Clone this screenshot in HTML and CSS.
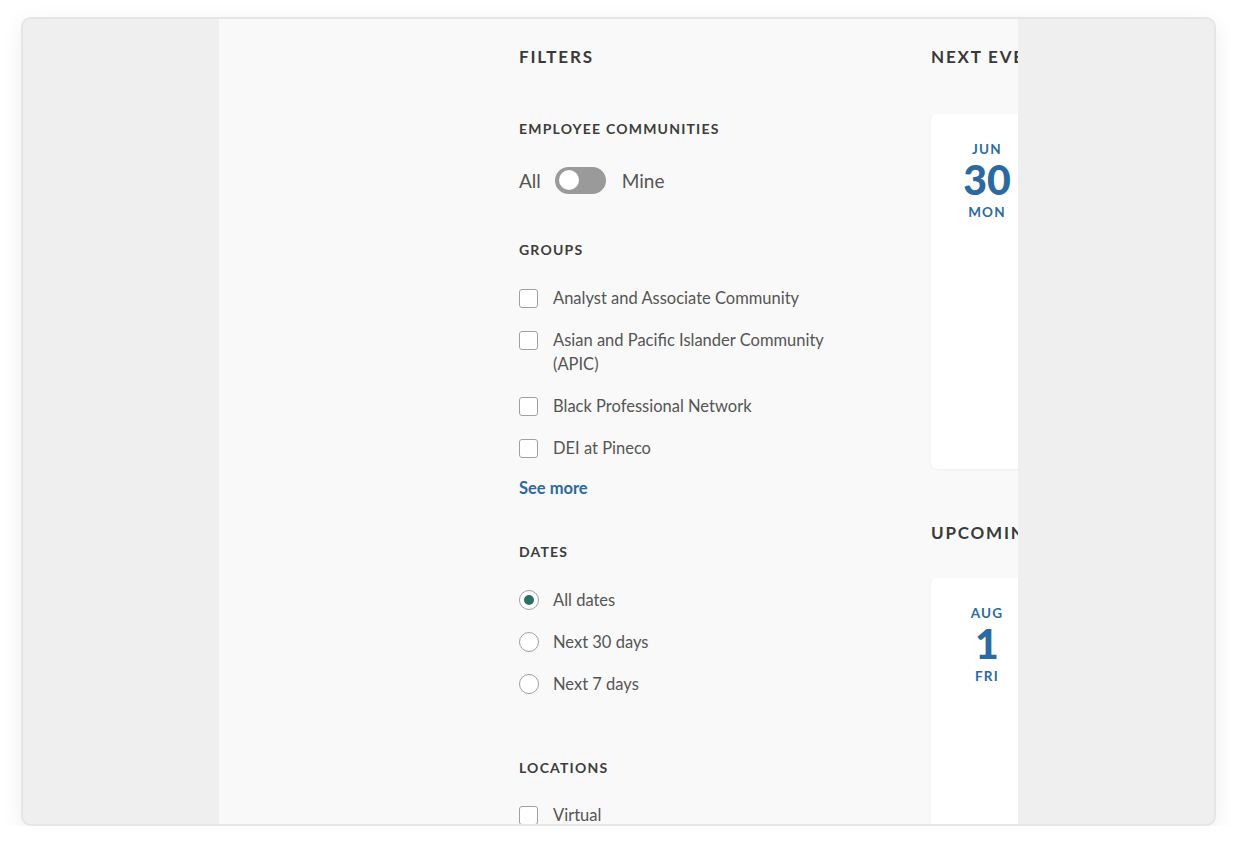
FILE: index.html
```html
<!DOCTYPE html>
<html lang="en">
<head>
<meta charset="utf-8">
<title>Events</title>
<link rel="stylesheet" href="styles.css">
</head>
<body>
<div class="frame">
  <div class="side"></div>
  <main class="center">
    <section class="filters">
      <h2 class="title">FILTERS</h2>

      <h3 class="label label-ec">EMPLOYEE COMMUNITIES</h3>
      <div class="toggle-row">
        <span>All</span>
        <span class="toggle"><span class="knob"></span></span>
        <span>Mine</span>
      </div>

      <h3 class="label label-groups">GROUPS</h3>
      <ul class="opts">
        <li class="opt"><span class="box"></span><span class="txt">Analyst and Associate Community</span></li>
        <li class="opt"><span class="box"></span><span class="txt">Asian and Pacific Islander Community (APIC)</span></li>
        <li class="opt"><span class="box"></span><span class="txt">Black Professional Network</span></li>
        <li class="opt"><span class="box"></span><span class="txt">DEI at Pineco</span></li>
      </ul>
      <a class="more">See more</a>

      <h3 class="label label-dates">DATES</h3>
      <ul class="opts">
        <li class="opt"><span class="radio on"></span><span class="txt">All dates</span></li>
        <li class="opt"><span class="radio"></span><span class="txt">Next 30 days</span></li>
        <li class="opt"><span class="radio"></span><span class="txt">Next 7 days</span></li>
      </ul>

      <h3 class="label label-loc">LOCATIONS</h3>
      <ul class="opts">
        <li class="opt"><span class="box"></span><span class="txt">Virtual</span></li>
      </ul>
    </section>

    <section class="events">
      <h2 class="title">NEXT EVENT</h2>
      <div class="card card-next">
        <div class="date">
          <div class="mon">JUN</div>
          <div class="day">30</div>
          <div class="wd">MON</div>
        </div>
      </div>

      <h2 class="title title-up">UPCOMING EVENTS</h2>
      <div class="card card-up">
        <div class="date">
          <div class="mon">AUG</div>
          <div class="day">1</div>
          <div class="wd">FRI</div>
        </div>
      </div>
    </section>
  </main>
  <div class="side"></div>
</div>
</body>
</html>
```

FILE: styles.css
```css
* { box-sizing: border-box; }

html, body {
  margin: 0;
  padding: 0;
  background: #ffffff;
}

body {
  font-family: Lato, "Open Sans", "Liberation Sans", sans-serif;
  color: #555555;
}

.frame {
  margin: 17px 0 0 21px;
  width: 1195px;
  height: 809px;
  border: 2px solid #e5e5e5;
  border-radius: 10px;
  box-shadow: 0 6px 22px rgba(0, 0, 0, 0.07);
  overflow: hidden;
  display: grid;
  grid-template-columns: 196px 799px 1fr;
  background: #efefef;
}

.side {
  background: #efefef;
}

.center {
  background: #f9f9f9;
  display: flex;
  padding-left: 300px;
  padding-top: 28px;
  overflow: hidden;
}

.filters {
  width: 412px;
  flex: none;
}

.events {
  width: 420px;
  flex: none;
}

.title {
  margin: 0;
  font-size: 17px;
  line-height: 20px;
  font-weight: 700;
  letter-spacing: 1.8px;
  color: #3a3a3a;
}

.label {
  margin: 0;
  font-size: 14px;
  line-height: 18px;
  font-weight: 700;
  letter-spacing: 1.2px;
  color: #3d3d3d;
}

.label-ec { margin-top: 53px; }
.label-groups { margin-top: 47px; }
.label-dates { margin-top: 43px; }
.label-loc { margin-top: 63px; }

.toggle-row {
  margin-top: 28px;
  height: 28px;
  display: flex;
  align-items: center;
  font-size: 19px;
  color: #555555;
}

.toggle {
  margin: 0 16px 0 14px;
  width: 51px;
  height: 27px;
  border-radius: 14px;
  background: #9a9a9a;
  display: flex;
  align-items: center;
  padding-left: 4px;
}

.knob {
  width: 20px;
  height: 20px;
  border-radius: 50%;
  background: #ffffff;
}

.opts {
  list-style: none;
  margin: 27px 0 0 0;
  padding: 0;
  width: 330px;
  display: flex;
  flex-direction: column;
  gap: 18px;
}

.label-loc + .opts { margin-top: 26px; }

.opt {
  display: flex;
  align-items: flex-start;
  font-size: 16.5px;
  line-height: 24px;
  color: #555555;
}

.box {
  flex: none;
  width: 19px;
  height: 19px;
  margin: 3px 15px 0 0;
  border: 1.5px solid #a0a0a0;
  border-radius: 3px;
  background: #ffffff;
}

.radio {
  flex: none;
  width: 20px;
  height: 20px;
  margin: 2px 14px 0 0;
  border: 1.5px solid #a0a0a0;
  border-radius: 50%;
  background: #ffffff;
  display: flex;
  align-items: center;
  justify-content: center;
}

.radio.on::after {
  content: "";
  width: 10px;
  height: 10px;
  border-radius: 50%;
  background: #2e6e63;
}

.more {
  display: block;
  margin-top: 16px;
  font-size: 16.5px;
  line-height: 24px;
  font-weight: 700;
  color: #2b6aa0;
}

.card {
  background: #ffffff;
  border-radius: 6px;
  box-shadow: 0 1px 3px rgba(0, 0, 0, 0.05);
  width: 400px;
}

.card-next {
  margin-top: 47px;
  height: 355px;
}

.title-up { margin-top: 54px; }

.card-up {
  margin-top: 35px;
  height: 300px;
}

.date {
  width: 112px;
  padding-top: 27px;
  text-align: center;
  color: #2b6aa0;
}

.mon, .wd {
  font-size: 13.5px;
  line-height: 16px;
  font-weight: 700;
  letter-spacing: 1.2px;
}

.day {
  margin: 3px 0 4px;
  font-size: 41px;
  line-height: 40px;
  font-weight: 900;
  color: #2b6aa0;
}
```
